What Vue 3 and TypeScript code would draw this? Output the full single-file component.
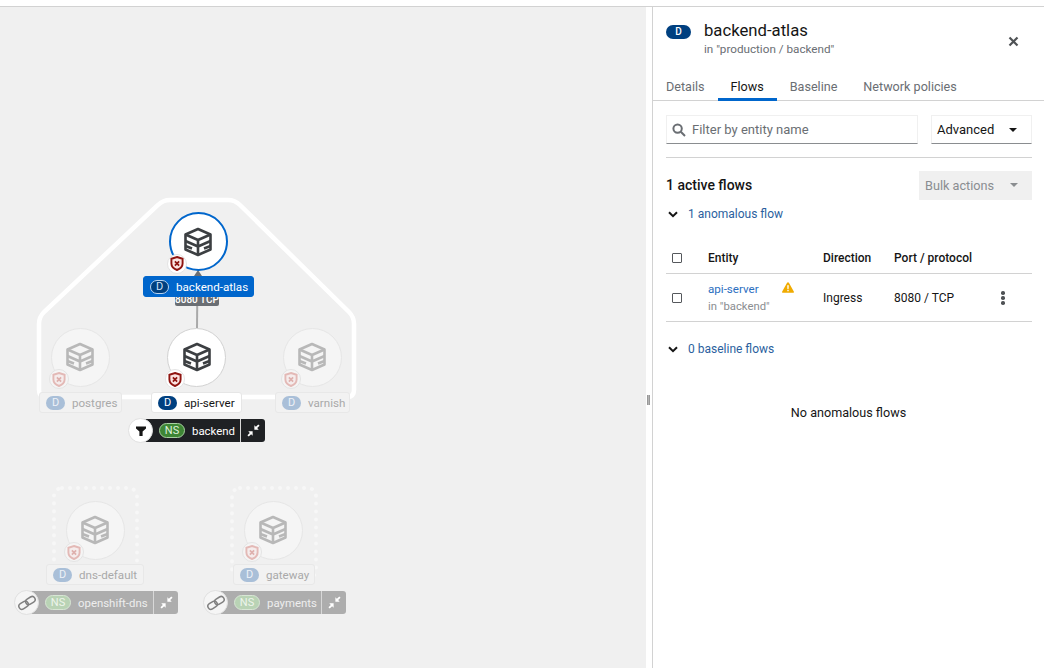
<script setup lang="ts">
interface TopoNode {
  name: string;
  cx: number;
  cy: number;
  labelX: number;
  labelY: number;
  labelW: number;
  faded?: boolean;
  selected?: boolean;
}

interface NsTag {
  name: string;
  x: number;
  y: number;
  w: number;
  faded?: boolean;
  filtered?: boolean;
}

const canvasTop = 7;

const nodes: TopoNode[] = [
  { name: "backend-atlas", cx: 198, cy: 241.5, labelX: 143, labelY: 276, labelW: 111, selected: true },
  { name: "api-server", cx: 196.5, cy: 357, labelX: 151, labelY: 392, labelW: 91 },
  { name: "postgres", cx: 80, cy: 357, labelX: 39, labelY: 392, labelW: 83, faded: true },
  { name: "varnish", cx: 312, cy: 357, labelX: 275, labelY: 392, labelW: 75, faded: true },
  { name: "dns-default", cx: 95, cy: 530, labelX: 46, labelY: 564, labelW: 98, faded: true },
  { name: "gateway", cx: 273, cy: 530, labelX: 233, labelY: 564, labelW: 82, faded: true },
];

const tags: NsTag[] = [
  { name: "backend", x: 128, y: 419, w: 137, filtered: true },
  { name: "openshift-dns", x: 14, y: 591, w: 164, faded: true },
  { name: "payments", x: 203, y: 591, w: 143, faded: true },
];

const tabs = ["Details", "Flows", "Baseline", "Network policies"];
</script>

<template>
  <div class="app">
    <div class="topbar"></div>
    <div class="main">
      <div class="canvas">
        <svg class="lines" width="646" height="661" viewBox="0 7 646 661">
          <path
            class="group-line"
            d="M170 200 H228 Q235 200 240 205 L349 312 Q354 317 354 324 V390 Q354 397 347 397 H46 Q39 397 39 390 V324 Q39 317 44 312 L158 205 Q163 200 170 200 Z"
          />
          <rect class="group-dots" x="54" y="488" width="83" height="90" rx="8" />
          <rect class="group-dots" x="232" y="488" width="84" height="90" rx="8" />
          <line class="edge" x1="197" y1="328" x2="197.5" y2="276" />
          <path class="edge-head" d="M198 270 L202 276 H194 Z" />
        </svg>

        <div class="edge-label" :style="{ left: '175px', top: 293 - canvasTop + 'px' }">8080 TCP</div>

        <template v-for="n in nodes" :key="n.name">
          <div
            class="node"
            :class="{ faded: n.faded, selected: n.selected }"
            :style="{ left: n.cx - 29.5 + 'px', top: n.cy - canvasTop - 29.5 + 'px' }"
          >
            <svg class="cube" width="30" height="30" viewBox="0 0 30 30">
              <path d="M15 2 L27.5 7.5 V22.5 L15 28 L2.5 22.5 V7.5 Z" />
              <path d="M2.5 7.5 L15 13 L27.5 7.5 M2.5 14 L15 19.5 L27.5 14 M15 13 V28 M2.5 19 L9 21.5 M27.5 19 L21 21.5" />
            </svg>
            <span class="shield-badge">
              <svg width="14" height="15" viewBox="0 0 14 15">
                <path class="shield" d="M7 1 L12.6 2.8 V7.5 C12.6 10.8 10 12.9 7 14 C4 12.9 1.4 10.8 1.4 7.5 V2.8 Z" />
                <path class="shield-x" d="M4.9 5.4 L9.1 9.6 M9.1 5.4 L4.9 9.6" />
              </svg>
            </span>
          </div>
          <div
            class="node-label"
            :class="{ faded: n.faded, selected: n.selected }"
            :style="{ left: n.labelX + 'px', top: n.labelY - canvasTop + 'px', width: n.labelW + 'px' }"
          >
            <span class="kind">D</span>
            <span class="node-name">{{ n.name }}</span>
          </div>
        </template>

        <div
          v-for="t in tags"
          :key="t.name"
          class="ns-tag"
          :class="{ faded: t.faded }"
          :style="{ left: t.x + 'px', top: t.y - canvasTop + 'px', width: t.w + 'px' }"
        >
          <span class="ns-action">
            <svg v-if="t.filtered" width="12" height="12" viewBox="0 0 12 12">
              <path fill="#151515" d="M1 1.5 H11 V3.5 L7.6 6.4 V11 H4.4 V6.4 L1 3.5 Z" />
            </svg>
            <svg v-else width="18" height="16" viewBox="0 0 18 16" fill="none" stroke="#808080" stroke-width="1.5">
              <rect x="0.6" y="7.2" width="10" height="6" rx="3" transform="rotate(-32 5.6 10.2)" />
              <rect x="7.4" y="2.6" width="10" height="6" rx="3" transform="rotate(-32 12.4 5.6)" />
            </svg>
          </span>
          <span class="ns-pill">NS</span>
          <span class="ns-name">{{ t.name }}</span>
          <span class="ns-collapse">
            <svg width="13" height="13" viewBox="0 0 12 12" fill="#fff">
              <path d="M11.6 1.6 L10.4.4 8.2 2.6 6.8 1.2 V5.2 H10.8 L9.4 3.8 Z" />
              <path d="M.4 10.4 L1.6 11.6 3.8 9.4 5.2 10.8 V6.8 H1.2 L2.6 8.2 Z" />
            </svg>
          </span>
        </div>
      </div>

      <div class="splitter"><span class="grip"></span></div>

      <aside class="panel">
        <header class="head">
          <span class="head-kind">D</span>
          <div class="head-text">
            <div class="head-title">backend-atlas</div>
            <div class="head-sub">in "production / backend"</div>
          </div>
          <svg class="close" width="11" height="11" viewBox="0 0 11 11">
            <path d="M1.5 1.5 L9.5 9.5 M9.5 1.5 L1.5 9.5" />
          </svg>
        </header>

        <nav class="tabs">
          <span v-for="t in tabs" :key="t" class="tab" :class="{ active: t === 'Flows' }">{{ t }}</span>
        </nav>

        <div class="filters">
          <div class="search">
            <svg width="14" height="14" viewBox="0 0 14 14" fill="none" stroke="#6a6e73" stroke-width="2">
              <circle cx="5.6" cy="5.6" r="4.2" />
              <path d="M8.8 8.8 L13 13" />
            </svg>
            <span>Filter by entity name</span>
          </div>
          <div class="select">
            <span>Advanced</span>
            <i class="caret"></i>
          </div>
        </div>

        <div class="summary">
          <h2>1 active flows</h2>
          <div class="bulk">
            <span>Bulk actions</span>
            <i class="caret"></i>
          </div>
        </div>

        <div class="section first">
          <svg class="chev" width="10" height="7" viewBox="0 0 10 7"><path d="M1 1.2 L5 5.2 L9 1.2" /></svg>
          <span>1 anomalous flow</span>
        </div>

        <div class="table">
          <div class="row header">
            <span class="c-check"><i class="box"></i></span>
            <span class="c-entity">Entity</span>
            <span class="c-dir">Direction</span>
            <span class="c-port">Port / protocol</span>
          </div>
          <div class="row body">
            <span class="c-check"><i class="box"></i></span>
            <span class="c-entity">
              <span class="entity-name">api-server</span>
              <svg class="warn" width="12" height="11" viewBox="0 0 12 11">
                <path fill="#f0ab00" d="M6 .3 C6.4.3 6.7.5 6.9.8 L11.8 9.4 C12.2 10.1 11.7 10.8 11 10.8 H1 C.3 10.8-.2 10.1.2 9.4 L5.1.8 C5.3.5 5.6.3 6 .3 Z" />
                <path fill="#fff" d="M5.2 3.2 H6.8 L6.6 7 H5.4 Z M5.3 7.8 H6.7 V9.2 H5.3 Z" />
              </svg>
              <span class="entity-ns">in "backend"</span>
            </span>
            <span class="c-dir">Ingress</span>
            <span class="c-port">8080 / TCP</span>
            <span class="kebab"><i></i><i></i><i></i></span>
          </div>
        </div>

        <div class="section second">
          <svg class="chev" width="10" height="7" viewBox="0 0 10 7"><path d="M1 1.2 L5 5.2 L9 1.2" /></svg>
          <span>0 baseline flows</span>
        </div>

        <p class="empty">No anomalous flows</p>
      </aside>
    </div>
  </div>
</template>

<style>
body {
  margin: 0;
  background: #fff;
}
</style>

<style scoped>
.app {
  height: 668px;
  display: flex;
  flex-direction: column;
  font-family: Roboto, "Noto Sans", sans-serif;
  color: #151515;
  overflow: hidden;
}

.topbar {
  height: 6px;
  background: #fff;
  border-bottom: 1px solid #d2d2d2;
  flex: none;
}

.main {
  flex: 1;
  display: flex;
  min-height: 0;
}

/* topology canvas */
.canvas {
  position: relative;
  width: 646px;
  flex: none;
  background: #f0f0f0;
  overflow: hidden;
}

.lines {
  position: absolute;
  inset: 0;
}

.group-line {
  fill: none;
  stroke: #fff;
  stroke-width: 4.5;
}

.group-dots {
  fill: none;
  stroke: #fff;
  stroke-width: 4;
  stroke-linecap: round;
  stroke-dasharray: 0.1 7.9;
  opacity: 0.45;
}

.edge {
  stroke: #a9a9a9;
  stroke-width: 2;
}

.edge-head {
  fill: #6a6e73;
}

.edge-label {
  position: absolute;
  width: 44px;
  height: 13px;
  background: #6a6e73;
  border-radius: 2px;
  color: #fff;
  font-size: 10px;
  font-weight: 500;
  line-height: 13px;
  text-align: center;
}

.node {
  position: absolute;
  box-sizing: border-box;
  width: 59px;
  height: 59px;
  border-radius: 50%;
  background: #fff;
  border: 1px solid #d2d2d2;
  display: flex;
  align-items: center;
  justify-content: center;
}

.node.selected {
  border: 2px solid #0066cc;
}

.node.faded {
  background: #f5f5f5;
  border-color: #e6e6e6;
}

.cube {
  fill: none;
  stroke: #3c3f42;
  stroke-width: 2.6;
  stroke-linejoin: round;
}

.node.faded .cube {
  stroke: #b8b8b8;
}

.shield-badge {
  position: absolute;
  left: calc(50% - 31.5px);
  top: calc(50% + 12px);
  box-sizing: border-box;
  width: 20px;
  height: 20px;
  border-radius: 50%;
  background: #fff;
  border: 1px solid #e4e4e4;
  display: flex;
  align-items: center;
  justify-content: center;
}

.node.faded .shield-badge {
  background: #f5f5f5;
}

.shield {
  fill: #fbe4e2;
  stroke: #8f1410;
  stroke-width: 1.9;
}

.shield-x {
  fill: none;
  stroke: #8f1410;
  stroke-width: 1.7;
}

.node.faded .shield {
  fill: #f5ecec;
  stroke: #e3b9b6;
}

.node.faded .shield-x {
  stroke: #deb0ad;
}

.node-label {
  position: absolute;
  box-sizing: border-box;
  height: 21px;
  padding-left: 6px;
  display: flex;
  align-items: center;
  gap: 7px;
  background: #fff;
  border: 1px solid #e6e6e6;
  border-radius: 3px;
  font-size: 11.6px;
  white-space: nowrap;
}

.node-label.selected {
  background: #0066cc;
  border-color: #0066cc;
  color: #fff;
}

.node-label.faded {
  background: #f2f2f2;
  border-color: #e8e8e8;
  color: #a9a9a9;
}

.kind {
  width: 19px;
  height: 14px;
  border-radius: 7px;
  background: #004080;
  color: #fff;
  font-size: 11px;
  line-height: 14px;
  text-align: center;
  flex: none;
}

.node-label.selected .kind {
  box-sizing: border-box;
  border: 1px solid #b8d4f0;
  line-height: 12px;
  color: #cfe2f5;
}

.node-label.faded .kind {
  background: #a9bfd8;
  color: #eef2f7;
}

.ns-tag {
  position: absolute;
  box-sizing: border-box;
  height: 23px;
  display: flex;
  align-items: center;
  padding-left: 31px;
  color: #fff;
  font-size: 11.4px;
  white-space: nowrap;
}

.ns-tag::before {
  content: "";
  position: absolute;
  left: 12px;
  right: 0;
  top: 0;
  bottom: 0;
  background: #1f2124;
  border-radius: 0 3px 3px 0;
}

.ns-tag.faded::before {
  background: #adadad;
}

.ns-action {
  position: absolute;
  left: 0;
  top: -1px;
  box-sizing: border-box;
  width: 25px;
  height: 25px;
  border-radius: 50%;
  background: #fff;
  border: 1px solid #e0e0e0;
  display: flex;
  align-items: center;
  justify-content: center;
}

.ns-tag.faded .ns-action {
  background: #f5f5f5;
}

.ns-pill {
  position: relative;
  box-sizing: border-box;
  width: 26px;
  height: 15px;
  border-radius: 8px;
  background: #3e8635;
  border: 1px solid #a8d0a2;
  color: #dff0dc;
  font-size: 11px;
  line-height: 13px;
  text-align: center;
  flex: none;
}

.ns-tag.faded .ns-pill {
  background: #b9d3b5;
  border-color: #d8e6d5;
  color: #eef5ec;
}

.ns-name {
  position: relative;
  margin-left: 7px;
}

.ns-tag.faded .ns-name {
  color: #eeeeee;
}

.ns-collapse {
  position: absolute;
  right: 0;
  top: 0;
  bottom: 0;
  width: 24px;
  border-left: 1px solid #d8d8d8;
  display: flex;
  align-items: center;
  justify-content: center;
}

/* splitter */
.splitter {
  position: relative;
  width: 6px;
  flex: none;
  background: #fff;
  border-right: 1px solid #d2d2d2;
}

.grip {
  position: absolute;
  left: 1px;
  top: 388px;
  width: 3px;
  height: 10px;
  background: #b4b4b4;
  border-left: 1px solid #999;
  border-right: 1px solid #999;
  box-sizing: border-box;
}

/* side panel */
.panel {
  flex: 1;
  min-width: 0;
  background: #fff;
  font-size: 12px;
}

.head {
  display: flex;
  align-items: flex-start;
  padding: 13px 25px 0 13px;
  height: 55px;
  box-sizing: content-box;
}

.head-kind {
  width: 25px;
  height: 14px;
  margin-top: 5px;
  border-radius: 7px;
  background: #004080;
  color: #fff;
  font-size: 10px;
  font-weight: 500;
  line-height: 14px;
  text-align: center;
  flex: none;
}

.head-text {
  margin-left: 13px;
  flex: 1;
}

.head-title {
  font-size: 16.7px;
  line-height: 22px;
}

.head-sub {
  font-size: 11.7px;
  line-height: 16px;
  color: #6a6e73;
  margin-top: -1px;
}

.close {
  margin-top: 16px;
  fill: none;
  stroke: #4f5255;
  stroke-width: 2.2;
}

.tabs {
  display: flex;
  height: 33px;
  padding-left: 13px;
  border-bottom: 1px solid #d2d2d2;
  box-sizing: border-box;
  margin-top: -7px;
}

.tab {
  padding: 10px 13px 0;
  font-size: 12.6px;
  line-height: 18px;
  color: #6a6e73;
  margin-bottom: -1px;
}

.tab:first-child {
  padding-left: 0;
}

.tab.active {
  color: #151515;
  border-bottom: 3px solid #0066cc;
}

.filters {
  display: flex;
  gap: 13px;
  margin: 14px 12px 0 13px;
  padding-bottom: 13px;
  border-bottom: 1px solid #d2d2d2;
}

.search,
.select {
  box-sizing: border-box;
  height: 29px;
  display: flex;
  align-items: center;
  border: 1px solid #f0f0f0;
  border-bottom-color: #8a8d90;
  font-size: 13px;
}

.search {
  width: 252px;
  gap: 6px;
  padding-left: 5px;
  color: #6a6e73;
}

.select {
  flex: 1;
  justify-content: space-between;
  padding: 0 14px 0 5px;
}

.caret {
  width: 0;
  height: 0;
  border-left: 4px solid transparent;
  border-right: 4px solid transparent;
  border-top: 4px solid #151515;
}

.summary {
  display: flex;
  align-items: center;
  justify-content: space-between;
  margin: 12px 12px 0 13px;
}

.summary h2 {
  margin: 0;
  font-size: 14px;
  font-weight: 500;
  line-height: 30px;
}

.bulk {
  box-sizing: border-box;
  width: 113px;
  height: 29px;
  padding: 0 14px 0 6px;
  display: flex;
  align-items: center;
  justify-content: space-between;
  background: #f0f0f0;
  color: #8a8d90;
  font-size: 12.7px;
}

.bulk .caret {
  border-top-color: #8a8d90;
}

.section {
  display: flex;
  align-items: center;
  margin-left: 15px;
  color: #2b5f9e;
  font-size: 12px;
  line-height: 16px;
}

.section.first {
  margin-top: 6px;
}

.section.second {
  margin-top: 19px;
}

.chev {
  margin-right: 10px;
  fill: none;
  stroke: #151515;
  stroke-width: 2;
}

.table {
  margin: 21px 12px 0 13px;
}

.row {
  position: relative;
  display: flex;
  align-items: center;
  border-bottom: 1px solid #d2d2d2;
}

.row.header {
  height: 30px;
  font-weight: 500;
  font-size: 12px;
}

.row.body {
  height: 47px;
}

.c-check {
  width: 42px;
  padding-left: 6px;
  box-sizing: border-box;
  display: flex;
  flex: none;
}

.box {
  box-sizing: border-box;
  width: 10px;
  height: 10px;
  border: 1px solid #55585c;
  border-radius: 1px;
}

.c-entity {
  position: relative;
  width: 115px;
  flex: none;
}

.c-dir {
  width: 71px;
  flex: none;
}

.entity-name {
  display: block;
  color: #2b6fbf;
  font-size: 11.6px;
  line-height: 17px;
}

.entity-ns {
  display: block;
  color: #8a8d90;
  font-size: 11.3px;
  line-height: 17px;
}

.warn {
  position: absolute;
  left: 74px;
  top: 1px;
}

.kebab {
  position: absolute;
  left: 335px;
  top: 17px;
  display: flex;
  flex-direction: column;
  gap: 1.5px;
}

.kebab i {
  width: 3.5px;
  height: 3.5px;
  border-radius: 50%;
  background: #4f5255;
}

.empty {
  margin: 47px 0 0 0;
  text-align: center;
  font-size: 12.6px;
  line-height: 18px;
}
</style>
